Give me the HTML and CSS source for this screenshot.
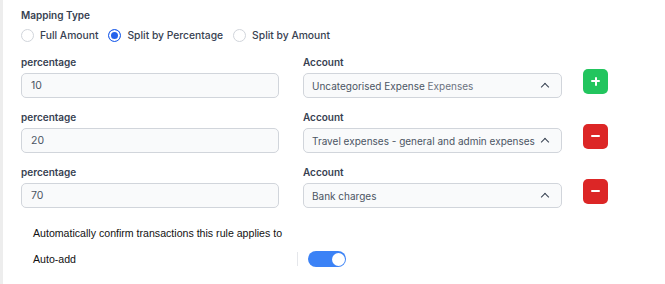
FILE: index.html
```html
<!DOCTYPE html>
<html lang="en">
<head>
    <meta charset="UTF-8">
    <meta name="viewport" content="width=device-width, initial-scale=1.0">
    <title>Mapping Type</title>
    <link rel="stylesheet" href="styles.css">
</head>
<body>
    <div class="panel">
        <div class="title">Mapping Type</div>
        <div class="radios">
            <label class="radio"><span class="dot"></span>Full Amount</label>
            <label class="radio"><span class="dot checked"></span>Split by Percentage</label>
            <label class="radio"><span class="dot"></span>Split by Amount</label>
        </div>

        <div class="rows">
            <div class="row">
                <div class="field">
                    <div class="lbl">percentage</div>
                    <div class="box">10</div>
                </div>
                <div class="field">
                    <div class="lbl">Account</div>
                    <div class="box select"><span>Uncategorised Expense <span class="muted">Expenses</span></span><span class="chev"></span></div>
                </div>
                <button class="btn add" aria-label="Agregar fila"><span class="bar"></span><span class="bar vert"></span></button>
            </div>
            <div class="row">
                <div class="field">
                    <div class="lbl">percentage</div>
                    <div class="box">20</div>
                </div>
                <div class="field">
                    <div class="lbl">Account</div>
                    <div class="box select"><span>Travel expenses - general and admin expenses</span><span class="chev"></span></div>
                </div>
                <button class="btn remove" aria-label="Quitar fila"><span class="bar"></span></button>
            </div>
            <div class="row">
                <div class="field">
                    <div class="lbl">percentage</div>
                    <div class="box">70</div>
                </div>
                <div class="field">
                    <div class="lbl">Account</div>
                    <div class="box select"><span>Bank charges</span><span class="chev"></span></div>
                </div>
                <button class="btn remove" aria-label="Quitar fila"><span class="bar"></span></button>
            </div>
        </div>

        <div class="auto">
            <div class="auto-title">Automatically confirm transactions this rule applies to</div>
            <div class="auto-row">
                <div class="auto-lbl">Auto-add</div>
                <div class="sep"></div>
                <div class="toggle"><span class="knob"></span></div>
            </div>
        </div>
    </div>
</body>
</html>
```

FILE: styles.css
```css
body {
    margin: 0;
    background-color: #fff;
    font-family: Inter, "Noto Sans", sans-serif;
    font-size: 10px;
    color: #374151;
}
.panel {
    border-left: 3px solid #ededed;
    padding: 8px 0 0 18px;
    height: 276px;
}
.title {
    font-weight: 600;
    line-height: 14px;
}
.radios {
    display: flex;
    gap: 10px;
    margin-top: 6px;
    height: 14px;
    align-items: center;
}
.radio {
    display: flex;
    align-items: center;
    gap: 6px;
    font-weight: 500;
    font-size: 10.3px;
}
.dot {
    width: 11px;
    height: 11px;
    border: 1px solid #d1d5db;
    border-radius: 50%;
    background: #fff;
}
.dot.checked {
    border-color: #2563eb;
    background: #2563eb;
    box-shadow: inset 0 0 0 2px #fff;
    width: 11px;
    height: 11px;
    border-width: 1.5px;
}
.rows {
    display: flex;
    flex-direction: column;
    gap: 12px;
    margin-top: 13px;
}
.row {
    display: grid;
    grid-template-columns: 258px 259px 25px;
    column-gap: 24px;
}
.row .btn {
    margin-left: -3px;
}
.lbl {
    font-weight: 600;
    line-height: 14px;
    margin-bottom: 4px;
}
.box {
    height: 23px;
    border: 1px solid #d1d5db;
    border-radius: 5px;
    background: #f9fafb;
    padding: 0 8px 0 9px;
    display: flex;
    align-items: center;
    color: #4b5563;
    font-size: 10.5px;
}
.select {
    justify-content: space-between;
    padding-left: 8px;
    padding-right: 13px;
    white-space: nowrap;
    font-size: 10px;
}
.muted {
    color: #6b7280;
}
.chev {
    width: 5px;
    height: 5px;
    border-left: 1.3px solid #374151;
    border-top: 1.3px solid #374151;
    transform: rotate(45deg);
    margin-top: 3px;
    flex-shrink: 0;
    margin-left: 4px;
}
.btn {
    align-self: end;
    margin-bottom: 4px;
    width: 25px;
    height: 25px;
    border: none;
    border-radius: 5px;
    position: relative;
    padding: 0;
}
.add {
    background: #22c55e;
}
.remove {
    background: #dc2626;
}
.bar {
    position: absolute;
    left: 8px;
    top: 11px;
    width: 9px;
    height: 2px;
    background: #fff;
    border-radius: 1px;
}
.bar.vert {
    left: 11.5px;
    top: 7.5px;
    width: 2px;
    height: 9px;
}
.auto {
    margin-top: 18px;
    padding-left: 12px;
    font-family: "Liberation Sans", Arial, sans-serif;
    color: #111;
    font-size: 10.6px;
}
.auto-title {
    line-height: 14px;
}
.auto-row {
    display: flex;
    align-items: center;
    margin-top: 11px;
}
.auto-lbl {
    width: 264px;
}
.sep {
    width: 1px;
    height: 14px;
    background: #e5e7eb;
}
.toggle {
    margin-left: 10px;
    width: 38px;
    height: 16px;
    border-radius: 8px;
    background: #3b82f6;
    position: relative;
}
.knob {
    position: absolute;
    right: 1.5px;
    top: 1.5px;
    width: 13px;
    height: 13px;
    border-radius: 50%;
    background: #fff;
}
```
